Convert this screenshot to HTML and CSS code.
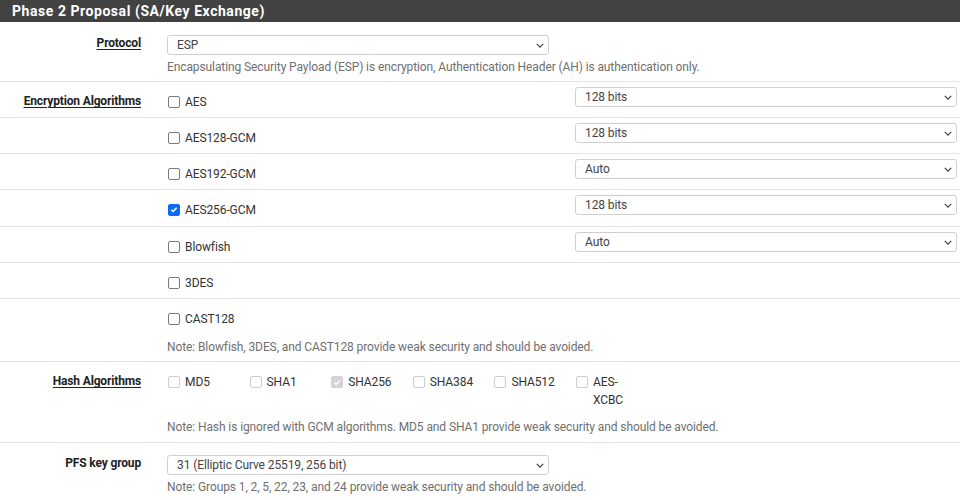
FILE: index.html
```html
<!DOCTYPE html>
<html>
<head>
<meta charset="utf-8">
<link rel="stylesheet" href="styles.css">
</head>
<body>
<div class="panel">
  <div class="panel-heading">Phase 2 Proposal (SA/Key Exchange)</div>

  <div class="row row-top">
    <div class="label"><span class="link">Protocol</span></div>
    <div class="field">
      <div class="select sel-narrow"><span>ESP</span><svg class="chev" viewBox="0 0 10 6"><path d="M1 1l4 4 4-4"/></svg></div>
      <div class="help">Encapsulating Security Payload (ESP) is encryption, Authentication Header (AH) is authentication only.</div>
    </div>
  </div>

  <div class="row">
    <div class="label lpad"><span class="link">Encryption Algorithms</span></div>
    <div class="enc">
      <label class="check"><span class="box"></span>AES</label>
      <div class="select sel-enc"><span>128 bits</span><svg class="chev" viewBox="0 0 10 6"><path d="M1 1l4 4 4-4"/></svg></div>
    </div>
  </div>
  <div class="row">
    <div class="label"></div>
    <div class="enc">
      <label class="check"><span class="box"></span>AES128-GCM</label>
      <div class="select sel-enc"><span>128 bits</span><svg class="chev" viewBox="0 0 10 6"><path d="M1 1l4 4 4-4"/></svg></div>
    </div>
  </div>
  <div class="row">
    <div class="label"></div>
    <div class="enc">
      <label class="check"><span class="box"></span>AES192-GCM</label>
      <div class="select sel-enc"><span>Auto</span><svg class="chev" viewBox="0 0 10 6"><path d="M1 1l4 4 4-4"/></svg></div>
    </div>
  </div>
  <div class="row">
    <div class="label"></div>
    <div class="enc enc-tall">
      <label class="check"><span class="box checked"><svg viewBox="0 0 12 12"><path d="M2.8 6.2l2.2 2.2 4.2-4.6"/></svg></span>AES256-GCM</label>
      <div class="select sel-enc"><span>128 bits</span><svg class="chev" viewBox="0 0 10 6"><path d="M1 1l4 4 4-4"/></svg></div>
    </div>
  </div>
  <div class="row">
    <div class="label"></div>
    <div class="enc">
      <label class="check"><span class="box"></span>Blowfish</label>
      <div class="select sel-enc"><span>Auto</span><svg class="chev" viewBox="0 0 10 6"><path d="M1 1l4 4 4-4"/></svg></div>
    </div>
  </div>
  <div class="row">
    <div class="label"></div>
    <div class="enc">
      <label class="check"><span class="box"></span>3DES</label>
    </div>
  </div>
  <div class="row">
    <div class="label"></div>
    <div class="enc-last">
      <label class="check"><span class="box"></span>CAST128</label>
      <div class="note">Note: Blowfish, 3DES, and CAST128 provide weak security and should be avoided.</div>
    </div>
  </div>

  <div class="row">
    <div class="label lpad"><span class="link">Hash Algorithms</span></div>
    <div class="enc-last hash-cell">
      <div class="hashes">
        <label class="hash"><span class="box dis"></span><span>MD5</span></label>
        <label class="hash"><span class="box dis"></span><span>SHA1</span></label>
        <label class="hash"><span class="box dis dis-checked"><svg viewBox="0 0 12 12"><path d="M2.8 6.2l2.2 2.2 4.2-4.6"/></svg></span><span>SHA256</span></label>
        <label class="hash"><span class="box dis"></span><span>SHA384</span></label>
        <label class="hash"><span class="box dis"></span><span>SHA512</span></label>
        <label class="hash"><span class="box dis"></span><span class="narrow">AES-XCBC</span></label>
      </div>
      <div class="note">Note: Hash is ignored with GCM algorithms. MD5 and SHA1 provide weak security and should be avoided.</div>
    </div>
  </div>

  <div class="row">
    <div class="label lpad2">PFS key group</div>
    <div class="field field2">
      <div class="select sel-narrow"><span>31 (Elliptic Curve 25519, 256 bit)</span><svg class="chev" viewBox="0 0 10 6"><path d="M1 1l4 4 4-4"/></svg></div>
      <div class="help">Note: Groups 1, 2, 5, 22, 23, and 24 provide weak security and should be avoided.</div>
    </div>
  </div>
</div>
</body>
</html>
```

FILE: styles.css
```css
* { box-sizing: border-box; }
html, body { margin: 0; padding: 0; background: #fff; }
body {
  font-family: Roboto, "Liberation Sans", sans-serif;
  font-size: 12px;
  letter-spacing: -0.1px;
  color: #333;
  width: 960px;
  height: 500px;
  overflow: hidden;
}
.panel-heading {
  height: 22px;
  background: #424242;
  color: #fff;
  font-weight: bold;
  font-size: 14px;
  letter-spacing: 0.55px;
  line-height: 22px;
  padding-left: 12px;
}
.row {
  display: grid;
  grid-template-columns: 167px 1fr;
  border-top: 1px solid #e4e4e4;
}
.row-top { border-top: none; }
.label {
  text-align: right;
  padding-right: 26px;
  font-weight: bold;
  color: #222;
  letter-spacing: -0.15px;
  line-height: 17px;
  padding-top: 13px;
}
.label.lpad { padding-top: 11px; }
.label.lpad2 { padding-top: 12px; }
.link { text-decoration: underline; text-underline-offset: 2px; }
.field { padding: 13px 0 5px 0; }
.field2 { padding-top: 12px; padding-bottom: 4px; }
.select {
  height: 20px;
  border: 1px solid #cfcfcf;
  border-radius: 3px;
  display: flex;
  align-items: center;
  justify-content: space-between;
  padding: 0 4px 0 9px;
  color: #444;
  background: #fff;
}
.sel-narrow { width: 382px; }
.sel-enc { width: 382px; margin-top: 5px; }
.chev { width: 8px; height: 5px; fill: none; stroke: #444; stroke-width: 1.6; }
.help, .note { color: #6f6f6f; line-height: 17px; }
.help { margin-top: 4px; }
.enc {
  display: grid;
  grid-template-columns: 408px 382px;
  height: 35px;
}
.enc-tall { height: 36px; }
.check {
  display: flex;
  align-items: center;
  height: 17px;
  margin-top: 11px;
  padding-left: 1px;
  color: #333;
}
.box {
  width: 12px;
  height: 12px;
  border: 1px solid #7a7a7a;
  border-radius: 2px;
  margin-right: 5px;
  flex: none;
  display: flex;
  align-items: center;
  justify-content: center;
  background: #fff;
}
.box svg { width: 11px; height: 11px; fill: none; stroke: #fff; stroke-width: 1.8; }
.box.checked { background: #0a6cf0; border-color: #0a6cf0; }
.box.dis { border-color: #cdcdcd; }
.box.dis-checked { background: #d4d4d4; border-color: #d4d4d4; }
.enc-last { padding-top: 11px; padding-bottom: 5px; }
.enc-last .check { margin-top: 0; }
.note { margin-top: 12px; }
.hash-cell { padding-bottom: 6px; }
.hash-cell .note { margin-top: 10px; }
.hashes { display: flex; padding-left: 1px; }
.hash {
  width: 81.6px;
  display: flex;
  align-items: flex-start;
  line-height: 18px;
}
.hash .box { margin-top: 3px; margin-right: 5px; }
.narrow { width: 36px; }
```
